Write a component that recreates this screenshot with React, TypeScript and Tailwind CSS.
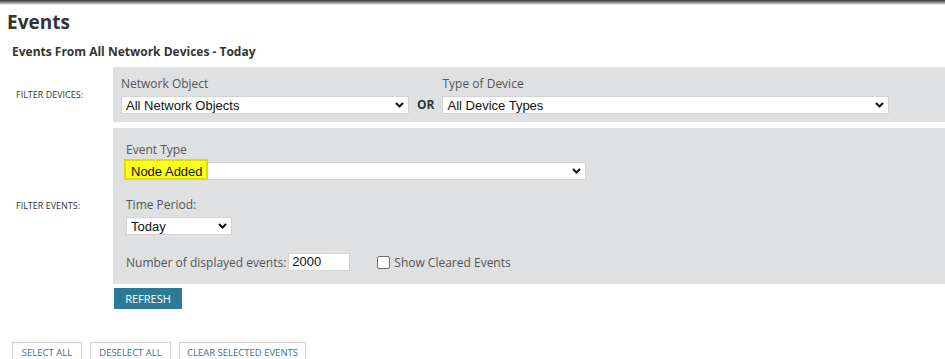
import React from "react";

const OS = "font-['Open_Sans',sans-serif]";
const AR = "font-['Liberation_Sans',Arial,sans-serif]";

function Chevron() {
  return (
    <svg width="9" height="6" viewBox="0 0 9 6" className="shrink-0">
      <path d="M1 1 L4.5 4.5 L8 1" fill="none" stroke="#111" strokeWidth="2" />
    </svg>
  );
}

function Select({ value, w, highlight }: { value: string; w: string; highlight?: boolean }) {
  return (
    <div className={`relative flex h-[18px] items-center justify-between border border-[#d4d4d4] bg-white pl-[4px] pr-[4px] ${w}`}>
      {highlight && (
        <span className="absolute left-[-3px] top-[-4px] h-[21px] w-[84px] border-2 border-[#dede00] bg-[#ffff1a]" />
      )}
      <span className={`relative ${AR} text-[13px] leading-none text-[#111]`}>{value}</span>
      <Chevron />
    </div>
  );
}

export default function App() {
  return (
    <div className={`min-h-[359px] w-[945px] overflow-hidden bg-white ${OS}`}>
      <div className="h-[5px] bg-gradient-to-b from-[#3a3a3a] via-[#8a8a8a] to-white" />
      <div className="mt-[3px] pl-[7px] text-[19px] font-bold leading-[28px] text-[#333]">Events</div>
      <div className="mt-[8px] pl-[12px] text-[12px] font-bold leading-[16px] text-[#333]">
        Events From All Network Devices - Today
      </div>

      <div className="mt-[7px] flex">
        <div className="flex w-[113px] items-center pl-[16px] text-[9px] uppercase text-[#333]">Filter Devices:</div>
        <div className="flex flex-1 items-end bg-[#dfe0e2] pb-[8px] pl-[8px] pt-[9px]">
          <div className="flex flex-col">
            <div className="text-[12px] leading-[16px] text-[#555]">Network Object</div>
            <div className="mt-[4px]">
              <Select value="All Network Objects" w="w-[288px]" />
            </div>
          </div>
          <div className="mx-[8px] mb-[1px] text-[12px] font-bold leading-[16px] text-[#333]">OR</div>
          <div className="flex flex-col">
            <div className="text-[12px] leading-[16px] text-[#555]">Type of Device</div>
            <div className="mt-[4px]">
              <Select value="All Device Types" w="w-[447px]" />
            </div>
          </div>
        </div>
      </div>

      <div className="mt-[6px] flex">
        <div className="flex w-[113px] items-center pl-[16px] text-[9px] uppercase text-[#333]">Filter Events:</div>
        <div className="flex flex-1 flex-col bg-[#dfe0e2] pb-[13px] pl-[13px] pt-[14px]">
          <div className="text-[12px] leading-[16px] text-[#555]">Event Type</div>
          <div className="mt-[4px]">
            <Select value="Node Added" w="w-[460px]" highlight />
          </div>
          <div className="mt-[17px] text-[12px] leading-[16px] text-[#555]">Time Period:</div>
          <div className="mt-[4px]">
            <Select value="Today" w="w-[106px]" />
          </div>
          <div className="mt-[17px] flex items-center">
            <span className="mt-[2px] text-[12px] leading-[16px] text-[#555]">Number of displayed events:</span>
            <div className={`ml-[2px] flex h-[18px] w-[62px] items-center border border-[#d4d4d4] bg-white pl-[3px] ${AR} text-[13px] leading-none text-[#111]`}>
              2000
            </div>
            <div className="ml-[27px] mt-[1px] h-[13px] w-[13px] rounded-[2px] border border-[#6f6f6f] bg-white" />
            <span className="ml-[4px] mt-[3px] text-[12px] leading-[16px] text-[#555]">Show Cleared Events</span>
          </div>
        </div>
      </div>

      <div className="ml-[114px] mt-[4px] flex h-[21px] w-[68px] items-center justify-center bg-[#2b7b98] text-[11px] leading-none text-white">
        REFRESH
      </div>

      <div className="ml-[12px] mt-[33px] flex gap-[8px]">
        {[
          ["SELECT ALL", "w-[70px]"],
          ["DESELECT ALL", "w-[81px]"],
          ["CLEAR SELECTED EVENTS", "w-[127px]"],
        ].map(([t, w]) => (
          <div
            key={t}
            className={`flex h-[22px] items-start justify-center border border-[#cfcfcf] pt-[4px] text-[9.5px] leading-[12px] text-[#3c6f8c] ${w}`}
          >
            {t}
          </div>
        ))}
      </div>
    </div>
  );
}
